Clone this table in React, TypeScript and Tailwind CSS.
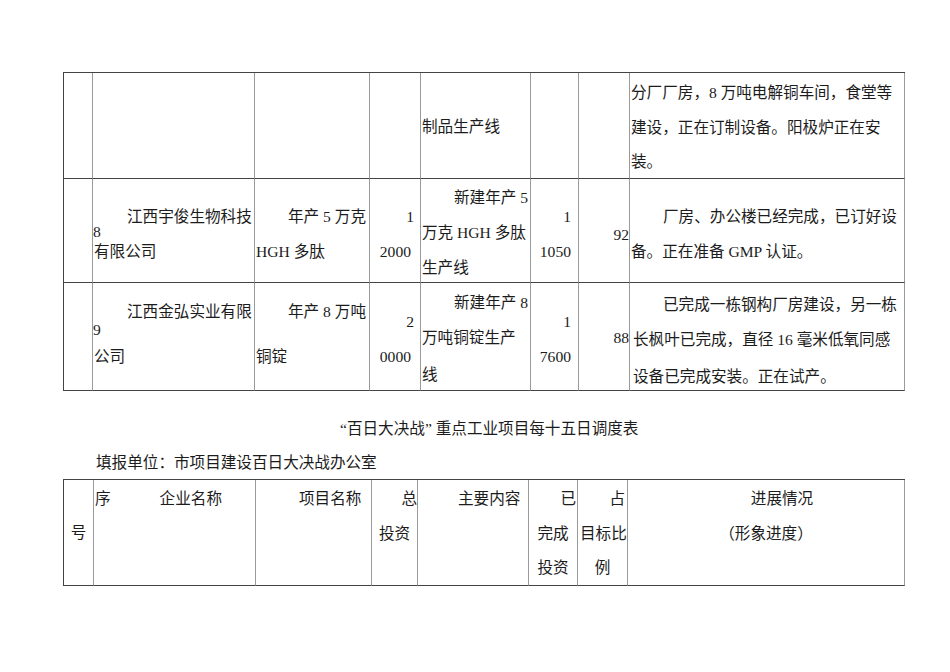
import * as React from 'react';

// 表格单元格：下边框深色，右边框浅灰
const cell = 'relative border-b border-r border-b-[#444] border-r-[#9a9a9a] whitespace-nowrap';
const line = 'leading-[35px] whitespace-nowrap';

function TopTable() {
    return (
        <div className="grid grid-cols-[29px_162px_115px_51px_110px_48px_51px_275px] grid-rows-[106px_104px_108px] border-t border-l border-t-[#444] border-l-[#444] w-[842px]">
            {/* 第一行（续表） */}
            <div className={cell} />
            <div className={cell} />
            <div className={cell} />
            <div className={cell} />
            <div className={`${cell} pt-[36px] pl-[1px]`}>
                <div className={line}>制品生产线</div>
            </div>
            <div className={cell} />
            <div className={cell} />
            <div className={`${cell} pt-[3px] pl-[1px]`}>
                <div className="leading-[34.5px]">分厂厂房，8 万吨电解铜车间，食堂等</div>
                <div className="leading-[34.5px]">建设，正在订制设备。阳极炉正在安</div>
                <div className="leading-[34.5px]">装。</div>
            </div>

            {/* 序号 8 */}
            <div className={cell} />
            <div className={`${cell} pt-[20px] pl-[1px]`}>
                <div className={`${line} pl-[33px]`}>江西宇俊生物科技</div>
                <div className={line}>有限公司</div>
                <span className="absolute left-0 top-[45px] leading-[16px]">8</span>
            </div>
            <div className={`${cell} pt-[20px] pl-[1px]`}>
                <div className={`${line} pl-[32px]`}>年产 5 万克</div>
                <div className={line}>HGH 多肽</div>
            </div>
            <div className={`${cell} pt-[20px] pr-[6px] text-right`}>
                <div className={line}>1</div>
                <div className={`${line} pr-[3px]`}>2000</div>
            </div>
            <div className={`${cell} pt-[1px] pl-[1px]`}>
                <div className={`${line} pl-[32px]`}>新建年产 5</div>
                <div className={line}>万克 HGH 多肽</div>
                <div className={line}>生产线</div>
            </div>
            <div className={`${cell} pt-[20px] pr-[7px] text-right`}>
                <div className={line}>1</div>
                <div className={line}>1050</div>
            </div>
            <div className={`${cell} pt-[38px] text-right`}>
                <div className={line}>92</div>
            </div>
            <div className={`${cell} pt-[20px] pl-[1px]`}>
                <div className={`${line} pl-[32px]`}>厂房、办公楼已经完成，已订好设</div>
                <div className={line}>备。正在准备 GMP 认证。</div>
            </div>

            {/* 序号 9 */}
            <div className={cell} />
            <div className={`${cell} pt-[11px] pl-[1px]`}>
                <div className={`${line} pl-[33px]`}>江西金弘实业有限</div>
                <div className={`${line} mt-[10px]`}>公司</div>
                <span className="absolute left-0 top-[39px] leading-[16px]">9</span>
            </div>
            <div className={`${cell} pt-[11px] pl-[1px]`}>
                <div className={`${line} pl-[32px]`}>年产 8 万吨</div>
                <div className={`${line} mt-[10px]`}>铜锭</div>
            </div>
            <div className={`${cell} pt-[21px] pr-[6px] text-right`}>
                <div className={line}>2</div>
                <div className={`${line} pr-[3px]`}>0000</div>
            </div>
            <div className={`${cell} pt-[2px] pl-[1px]`}>
                <div className={`${line} pl-[32px]`}>新建年产 8</div>
                <div className={line}>万吨铜锭生产</div>
                <div className={`${line} mt-[2px]`}>线</div>
            </div>
            <div className={`${cell} pt-[21px] pr-[7px] text-right`}>
                <div className={line}>1</div>
                <div className={line}>7600</div>
            </div>
            <div className={`${cell} pt-[37px] text-right`}>
                <div className={line}>88</div>
            </div>
            <div className={`${cell} pt-[4px] pl-[3px]`}>
                <div className={`${line} pl-[30px]`}>已完成一栋钢构厂房建设，另一栋</div>
                <div className={line}>长枫叶已完成，直径 16 毫米低氧同感</div>
                <div className={`${line} mt-[2px]`}>设备已完成安装。正在试产。</div>
            </div>
        </div>
    );
}

function BottomTable() {
    const hl = 'leading-[34.5px] whitespace-nowrap';
    return (
        <div className="grid grid-cols-[30px_162px_116px_46px_111px_49px_50px_277px] grid-rows-[106px] border-t border-l border-t-[#444] border-l-[#444] w-[842px]">
            <div className={`${cell} pt-[36px] text-center`}>
                <div className={hl}>号</div>
            </div>
            <div className={`${cell} pt-[2px] pl-[1px]`}>
                <div className={`${hl} flex`}>
                    <span>序</span>
                    <span className="ml-[49px]">企业名称</span>
                </div>
            </div>
            <div className={`${cell} pt-[2px] pl-[43px]`}>
                <div className={hl}>项目名称</div>
            </div>
            <div className={`${cell} pt-[2px]`}>
                <div className={`${hl} text-right`}>总</div>
                <div className={`${hl} text-center`}>投资</div>
            </div>
            <div className={`${cell} pt-[2px] pl-[40px]`}>
                <div className={hl}>主要内容</div>
            </div>
            <div className={`${cell} pt-[2px]`}>
                <div className={`${hl} text-right pr-[1px]`}>已</div>
                <div className={`${hl} text-center`}>完成</div>
                <div className={`${hl} text-center`}>投资</div>
            </div>
            <div className={`${cell} pt-[2px]`}>
                <div className={`${hl} text-right pr-[2px]`}>占</div>
                <div className={`${hl} pl-[2px]`}>目标比</div>
                <div className={`${hl} text-center`}>例</div>
            </div>
            <div className={`${cell} pt-[2px] text-center`}>
                <div className={`${hl} pl-[32px]`}>进展情况</div>
                <div className={hl}>（形象进度）</div>
            </div>
        </div>
    );
}

export default function App() {
    return (
        <div className="w-[950px] h-[672px] overflow-hidden bg-white text-[#1c1c1c] text-[15.6px] font-['Liberation_Serif','Noto_Sans_CJK_SC',serif]">
            <div className="pt-[72px] pl-[63px]">
                <TopTable />
                <div className="mt-[20px] pl-[277px] leading-[35px] whitespace-nowrap">
                    “百日大决战” 重点工业项目每十五日调度表
                </div>
                <div className="pl-[33px] leading-[33px] whitespace-nowrap">
                    填报单位：市项目建设百日大决战办公室
                </div>
                <BottomTable />
            </div>
        </div>
    );
}
